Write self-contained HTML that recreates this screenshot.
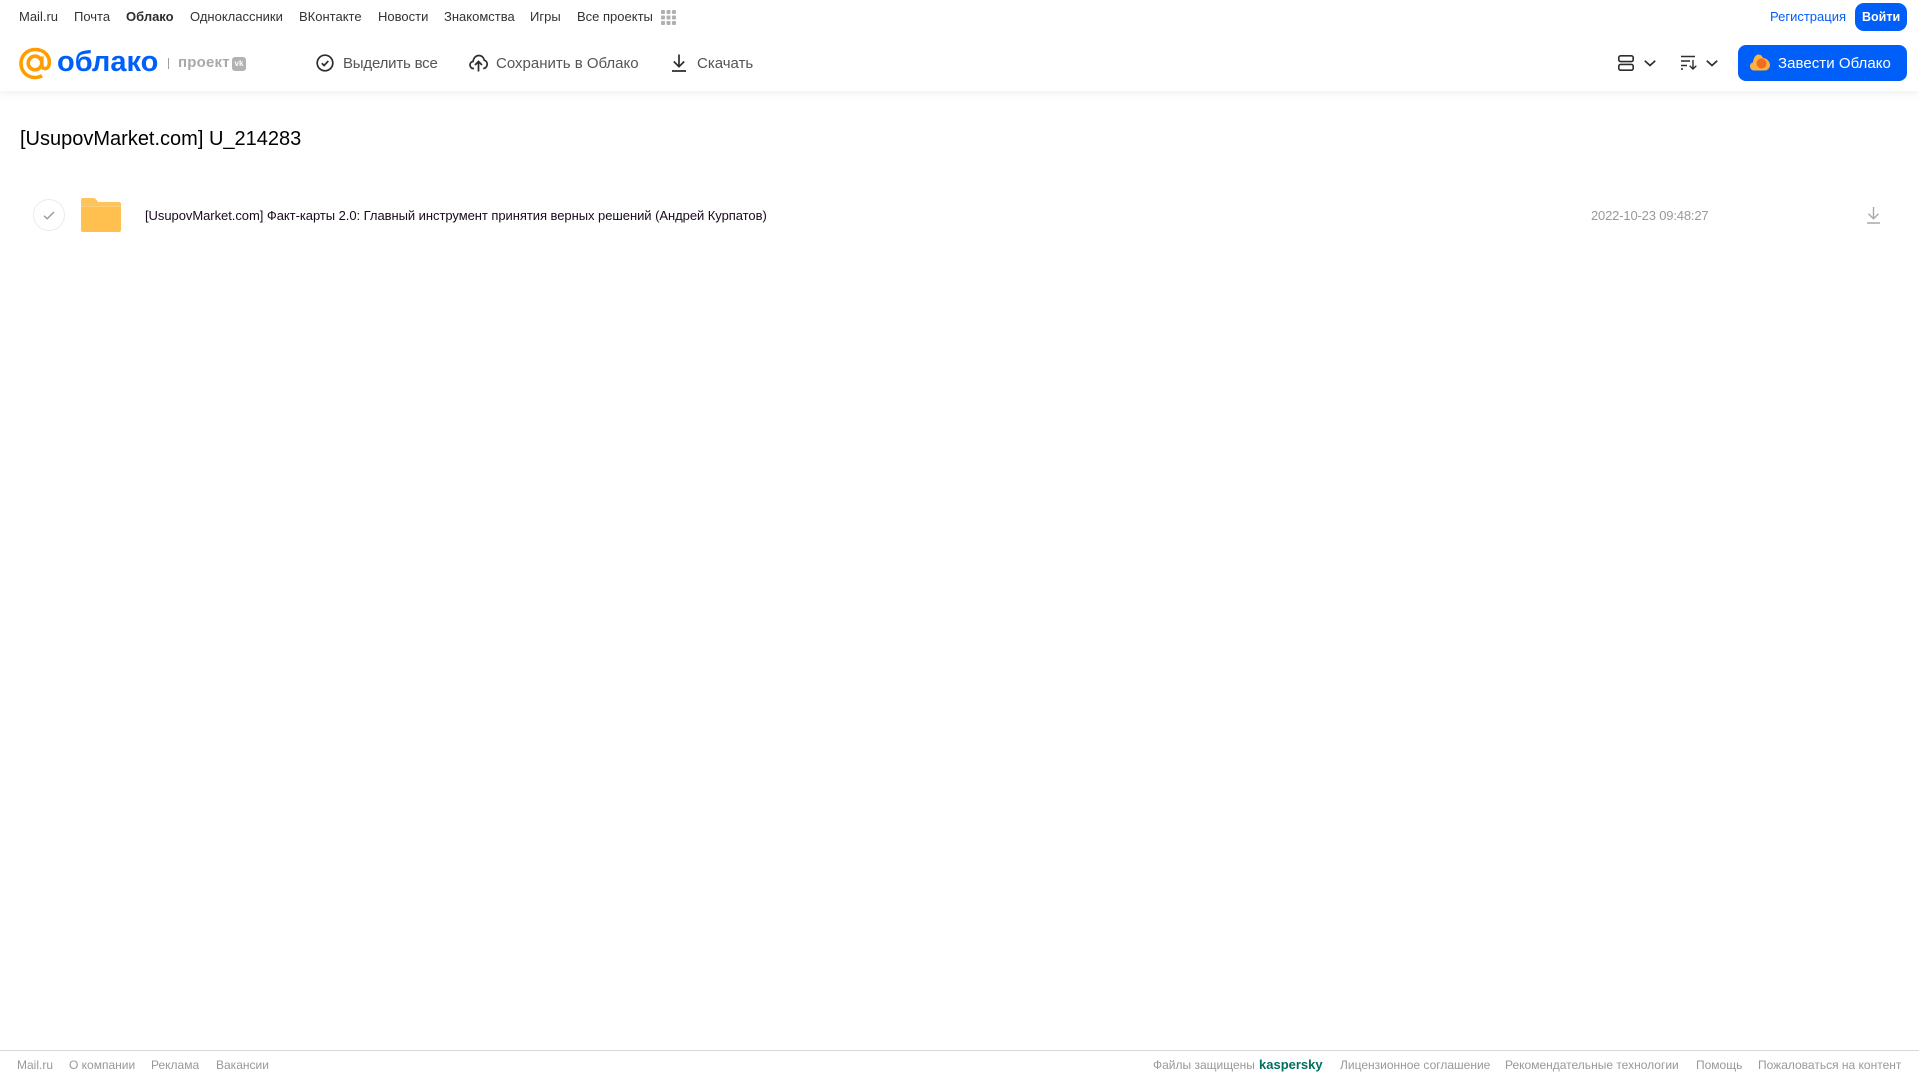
<!DOCTYPE html>
<html lang="ru"><head><meta charset="utf-8"><title>Облако</title>
<style>
html,body{margin:0;padding:0;background:#fff;overflow:hidden}
#p{position:relative;width:1919px;height:1079px;overflow:hidden;font-family:"Liberation Sans",Arial,sans-serif;background:#fff}
.t{position:absolute;white-space:nowrap;line-height:20px;font-size:13px;color:#333}
.h{font-size:15px;color:#555;line-height:20px;top:54px}
.f{font-size:12px;color:#999;top:1055px}
.n{top:7px}
svg{position:absolute;overflow:visible}
</style></head><body><div id="p">
<div style="position:absolute;left:0;top:0;width:1919px;height:91px;background:#fff;box-shadow:0 2px 8px rgba(0,0,0,.07)"></div>

<span class="t n" style="left:19px">Mail.ru</span>
<span class="t n" style="left:74px">Почта</span>
<span class="t n" style="left:126px;font-weight:bold;color:#2c2d2e">Облако</span>
<span class="t n" style="left:190px">Одноклассники</span>
<span class="t n" style="left:299px">ВКонтакте</span>
<span class="t n" style="left:378px">Новости</span>
<span class="t n" style="left:444px">Знакомства</span>
<span class="t n" style="left:530px">Игры</span>
<span class="t n" style="left:577px">Все проекты</span>
<svg style="left:661px;top:10px" width="15" height="15" fill="#b0b0b0"><rect x="0" y="0" width="4" height="4" rx="1"/><rect x="5.5" y="0" width="4" height="4" rx="1"/><rect x="11" y="0" width="4" height="4" rx="1"/><rect x="0" y="5.5" width="4" height="4" rx="1"/><rect x="5.5" y="5.5" width="4" height="4" rx="1"/><rect x="11" y="5.5" width="4" height="4" rx="1"/><rect x="0" y="11" width="4" height="4" rx="1"/><rect x="5.5" y="11" width="4" height="4" rx="1"/><rect x="11" y="11" width="4" height="4" rx="1"/></svg>

<span class="t n" style="left:1770px;color:#005ff9">Регистрация</span>
<div style="position:absolute;left:1855px;top:3px;width:52px;height:28px;background:#005ff9;border-radius:9px"></div>
<span class="t n" style="left:1862px;color:#fff;font-weight:bold;font-size:12.5px">Войти</span>

<!-- logo -->
<svg style="left:19px;top:47px" width="33" height="33" viewBox="0 0 33 33" fill="none" stroke="#ff9e00" stroke-width="3.600"><circle cx="16" cy="16" r="6.800"/><path d="M22.800 9.500V18c0 5 6.700 5 7.500-1 .8-8-5-14.500-14-14.500C8 2.500 2 8.500 2 16.500S8 30.500 16 30.500c3 0 5-.6 7-1.800"/></svg>
<span class="t" style="left:57px;top:47px;font-size:29px;line-height:30px;color:#005ff9;font-weight:bold">облако</span>
<div style="position:absolute;left:168px;top:58px;width:1px;height:11px;background:#a0a0a0"></div>
<span class="t" style="left:178px;top:53px;font-size:15px;font-weight:bold;color:#a9a9a9;letter-spacing:.2px">проект</span>
<div style="position:absolute;left:232px;top:57px;width:14px;height:14px;background:#b2b2b2;border-radius:3px"></div>
<span class="t" style="left:233px;top:54px;width:12px;text-align:center;font-size:8px;font-weight:bold;color:#fff">vk</span>

<!-- toolbar -->
<svg style="left:316px;top:54px" width="18" height="18" viewBox="0 0 18 18" fill="none" stroke="#2c2d2e" stroke-width="1.700"><circle cx="9" cy="9" r="7.800"/><path d="M5.800 9.300l2.300 2.200 4.200-4.500"/></svg>
<span class="t h" style="left:343px;letter-spacing:-.2px">Выделить все</span>
<svg style="left:469px;top:54px" width="19" height="18" viewBox="0 0 19 18" fill="none" stroke="#2c2d2e" stroke-width="1.700"><path d="M5 14.500H4.500C2.500 14.500 1 13 1 11c0-1.800 1.200-3.200 3-3.500C4.500 4 6.800 1.500 9.800 1.500c2.800 0 5 2 5.500 4.800 1.800.4 2.900 2.200 2.900 4 0 2.300-1.700 4.200-4 4.200"/><path d="M9.500 17.500V8M6 11l3.500-3.500L13 11"/></svg>
<span class="t h" style="left:496px">Сохранить в Облако</span>
<svg style="left:672px;top:54px" width="14" height="18" viewBox="0 0 14 18" fill="none" stroke="#2c2d2e" stroke-width="1.700"><path d="M7 0.500V12.500M1.800 7.500L7 12.700l5.200-5.200M0 17h14"/></svg>
<span class="t h" style="left:697px">Скачать</span>

<svg style="left:1618px;top:55px" width="16" height="16" viewBox="0 0 16 16" fill="none" stroke="#2c2d2e" stroke-width="1.600"><rect x=".8" y=".8" width="14.400" height="5.800" rx="1.800"/><rect x=".8" y="9.400" width="14.400" height="5.800" rx="1.800"/></svg>
<svg style="left:1644px;top:60px" width="12" height="7" viewBox="0 0 12 7" fill="none" stroke="#2c2d2e" stroke-width="1.700"><path d="M.8 .8L6 5.500 11.200 .8"/></svg>
<svg style="left:1681px;top:55px" width="16" height="15" viewBox="0 0 16 15" fill="none" stroke="#2c2d2e" stroke-width="1.400"><path d="M0 1.500h14M0 6h9M0 10.500h6M0 14h2M12 5v9M8.700 10.800L12 14l3.300-3.200"/></svg>
<svg style="left:1706px;top:60px" width="12" height="7" viewBox="0 0 12 7" fill="none" stroke="#2c2d2e" stroke-width="1.700"><path d="M.8 .8L6 5.500 11.200 .8"/></svg>

<div style="position:absolute;left:1738px;top:45px;width:169px;height:36px;background:#005ff9;border-radius:8px"></div>
<svg style="left:1750px;top:54px" width="20" height="17" viewBox="0 0 20 17"><path fill="#ffb13d" d="M4 16.500C1.500 16.500 0 14.500 0 12.300 0 10.300 1.200 8.800 3 8.400 3.500 4 5.500.5 8.500.5c2.300 0 3.800 1.500 4.500 3.500 3.500 0 7 3.500 7 7 0 3-2.500 5.500-5 5.500z"/><circle cx="11.500" cy="9.500" r="5" fill="#f26b21"/></svg>
<span class="t" style="left:1778px;top:54px;color:#fff;font-size:15px;letter-spacing:.05px">Завести Облако</span>

<span class="t" style="left:20px;top:127px;font-size:20px;line-height:24px;color:#000">[UsupovMarket.com] U_214283</span>

<!-- row -->
<div style="position:absolute;left:33px;top:199px;width:30px;height:30px;border:1px solid #ececec;border-radius:50%"></div>
<svg style="left:43px;top:211px" width="12" height="9" viewBox="0 0 12 9" fill="none" stroke="#999" stroke-width="1.400"><path d="M1 4.800l3.200 3L11 1"/></svg>
<svg style="left:81px;top:198px" width="40" height="34" viewBox="0 0 40 34"><path fill="#ffc35c" d="M2 0h10c2 0 3 1 4 2.500L17 4h21a2 2 0 0 1 2 2v6H0V2a2 2 0 0 1 2-2z"/><rect y="8" width="40" height="26" rx="2" fill="#ffc04f"/><rect y="8" width="40" height="1" fill="#ffce78"/></svg>
<span class="t" style="left:145px;top:206px;font-size:13px;letter-spacing:-.05px;color:#1a0a1f">[UsupovMarket.com] Факт-карты 2.0: Главный инструмент принятия верных решений (Андрей Курпатов)</span>
<span class="t" style="left:1591px;top:206px;font-size:13px;letter-spacing:-.17px;color:#999">2022-10-23 09:48:27</span>
<svg style="left:1867px;top:207px" width="13" height="17" viewBox="0 0 13 17" fill="none" stroke="#a8a8a8" stroke-width="1.400"><path d="M6.500 0v11.500M1.500 6.800l5 5 5-5M0 16h13"/></svg>

<!-- footer -->
<div style="position:absolute;left:0;top:1050px;width:1919px;height:1px;background:#d9d9d9"></div>
<span class="t f" style="left:17px">Mail.ru</span>
<span class="t f" style="left:69px">О компании</span>
<span class="t f" style="left:151px">Реклама</span>
<span class="t f" style="left:216px">Вакансии</span>
<span class="t f" style="left:1153px">Файлы защищены</span>
<span class="t f" style="left:1259px;color:#00705f;font-weight:bold;font-size:13px">kaspersky</span>
<span class="t f" style="left:1340px">Лицензионное соглашение</span>
<span class="t f" style="left:1505px">Рекомендательные технологии</span>
<span class="t f" style="left:1696px">Помощь</span>
<span class="t f" style="left:1758px">Пожаловаться на контент</span>
</div></body></html>
